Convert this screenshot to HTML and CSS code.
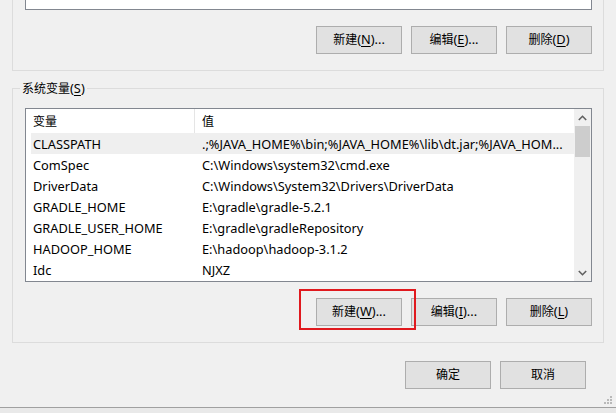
FILE: index.html
```html
<!DOCTYPE html>
<html>
<head>
<meta charset="utf-8">
<link rel="stylesheet" href="styles.css">
</head>
<body>
<div class="dialog">
  <div class="group group-user">
    <div class="list-stub"></div>
    <div class="btn-row">
      <button class="btn">新建<span class="lat">(<u>N</u>)...</span></button>
      <button class="btn">编辑<span class="lat">(<u>E</u>)...</span></button>
      <button class="btn">删除<span class="lat">(<u>D</u>)</span></button>
    </div>
  </div>

  <div class="group group-sys">
    <span class="legend">系统变量<span class="lat">(<u>S</u>)</span></span>
    <div class="list">
      <div class="list-body">
        <div class="head">
          <div class="hcol1">变量</div>
          <div class="hcol2">值</div>
        </div>
        <div class="row sel"><div class="c1">CLASSPATH</div><div class="c2">.;%JAVA_HOME%\bin;%JAVA_HOME%\lib\dt.jar;%JAVA_HOM...</div></div>
        <div class="row"><div class="c1">ComSpec</div><div class="c2">C:\Windows\system32\cmd.exe</div></div>
        <div class="row"><div class="c1">DriverData</div><div class="c2">C:\Windows\System32\Drivers\DriverData</div></div>
        <div class="row"><div class="c1">GRADLE_HOME</div><div class="c2">E:\gradle\gradle-5.2.1</div></div>
        <div class="row"><div class="c1">GRADLE_USER_HOME</div><div class="c2">E:\gradle\gradleRepository</div></div>
        <div class="row"><div class="c1">HADOOP_HOME</div><div class="c2">E:\hadoop\hadoop-3.1.2</div></div>
        <div class="row"><div class="c1">Idc</div><div class="c2">NJXZ</div></div>
      </div>
      <div class="scrollbar">
        <div class="arrow">
          <svg width="9" height="6" viewBox="0 0 9 6"><path d="M0.8 5 L4.5 1.3 L8.2 5" fill="none" stroke="#606060" stroke-width="1.6"/></svg>
        </div>
        <div class="thumb"></div>
        <div class="track"></div>
        <div class="arrow">
          <svg width="9" height="6" viewBox="0 0 9 6"><path d="M0.8 1 L4.5 4.7 L8.2 1" fill="none" stroke="#606060" stroke-width="1.6"/></svg>
        </div>
      </div>
    </div>
    <div class="btn-row">
      <div class="focus-wrap"><button class="btn">新建<span class="lat">(<u>W</u>)...</span></button></div>
      <button class="btn">编辑<span class="lat">(<u>I</u>)...</span></button>
      <button class="btn">删除<span class="lat">(<u>L</u>)</span></button>
    </div>
  </div>

  <div class="footer">
    <button class="btn">确定</button>
    <button class="btn">取消</button>
  </div>

  <svg class="grip" width="9" height="9" viewBox="0 0 9 9">
    <rect x="6" y="0" width="2" height="2" fill="#b9b9b9"/>
    <rect x="3" y="3" width="2" height="2" fill="#b9b9b9"/>
    <rect x="6" y="3" width="2" height="2" fill="#b9b9b9"/>
    <rect x="0" y="6" width="2" height="2" fill="#b9b9b9"/>
    <rect x="3" y="6" width="2" height="2" fill="#b9b9b9"/>
    <rect x="6" y="6" width="2" height="2" fill="#b9b9b9"/>
  </svg>
</div>
</body>
</html>
```

FILE: styles.css
```css
html, body {
  margin: 0;
  padding: 0;
  background: #e9e9e9;
  width: 616px;
  height: 413px;
  overflow: hidden;
}

body {
  font-family: "Noto Sans", "Noto Sans CJK SC", sans-serif;
  font-size: 12px;
  color: #000;
}

.lat {
  font-size: 12.8px;
}

.dialog {
  position: relative;
  box-sizing: border-box;
  height: 408px;
  background: #f0f0f0;
  border-bottom: 1px solid #a0a0a0;
  padding-top: 0;
}

.group {
  margin: 0 12px;
  border: 1px solid #dcdcdc;
}

.group-user {
  border-top: none;
  padding: 0 11px 16px 12px;
}

.list-stub {
  height: 9px;
  background: #fff;
  border: 1px solid #828790;
  border-top: none;
}

.btn-row {
  display: flex;
  justify-content: flex-end;
  gap: 9px;
  margin-top: 16px;
}

.btn {
  box-sizing: border-box;
  width: 86px;
  height: 28px;
  margin: 0;
  padding: 0 0 1px 0;
  background: #e1e1e1;
  border: 1px solid #adadad;
  border-radius: 0;
  font-family: "Noto Sans", "Noto Sans CJK SC", sans-serif;
  font-size: 12px;
  color: #000;
  line-height: 1;
}

.btn u, .legend u {
  text-underline-offset: 2px;
}

.group-sys {
  position: relative;
  margin-top: 17px;
  padding: 19px 11px 16px 12px;
}

.legend {
  position: absolute;
  top: -10px;
  left: 7px;
  padding: 0 2px;
  background: #f0f0f0;
  line-height: 18px;
}

.list {
  display: flex;
  height: 174px;
  box-sizing: border-box;
  background: #fff;
  border: 1px solid #828790;
}

.list-body {
  flex: 1;
  padding-left: 5px;
  overflow: hidden;
}

.head {
  display: flex;
  height: 24px;
  align-items: stretch;
}

.hcol1 {
  box-sizing: border-box;
  width: 164px;
  padding-left: 2px;
  border-right: 1px solid #e5e5e5;
  display: flex;
  align-items: center;
}

.hcol2 {
  padding-left: 7px;
  display: flex;
  align-items: center;
}

.row {
  display: flex;
  height: 21px;
  align-items: center;
  white-space: nowrap;
  font-size: 12.8px;
  padding-top: 1px;
  box-sizing: border-box;
}

.row.sel {
  background: #efefef;
}

.c1 {
  box-sizing: border-box;
  width: 164px;
  padding-left: 2px;
}

.c2 {
  padding-left: 7px;
}

.scrollbar {
  width: 17px;
  display: flex;
  flex-direction: column;
  background: #f0f0f0;
}

.arrow {
  height: 17px;
  display: flex;
  align-items: center;
  justify-content: center;
}

.thumb {
  height: 31px;
  margin: 0 1px;
  background: #cdcdcd;
}

.track {
  flex: 1;
}

.focus-wrap {
  position: relative;
}

.focus-wrap::after {
  content: "";
  position: absolute;
  left: -17px;
  top: -9px;
  width: 113px;
  height: 37px;
  border: 2px solid #e0191e;
  pointer-events: none;
}

.footer {
  display: flex;
  justify-content: flex-end;
  gap: 9px;
  margin-top: 18px;
  padding-right: 30px;
}

.grip {
  position: absolute;
  right: 3px;
  bottom: 2px;
}
```
